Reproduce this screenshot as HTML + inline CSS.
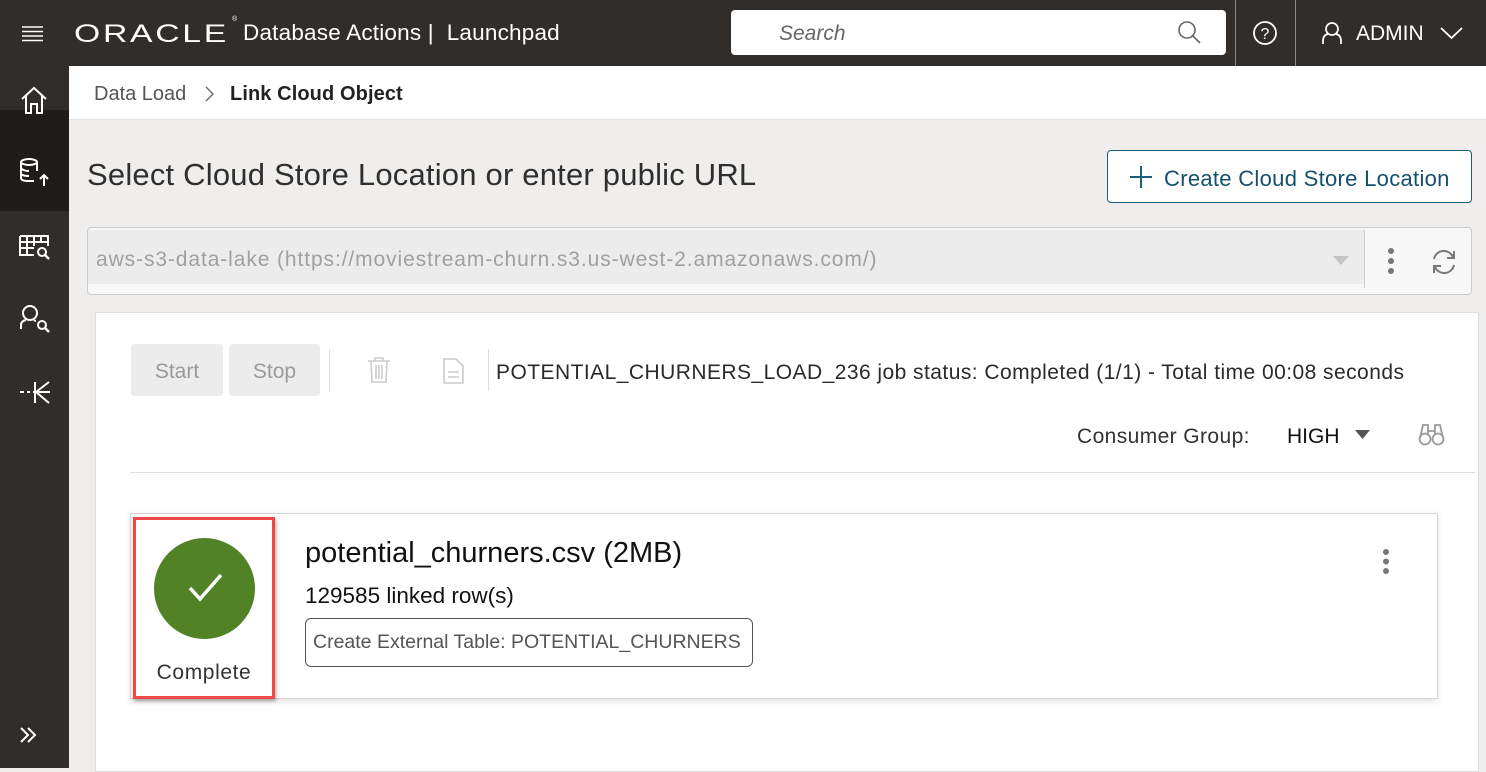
<!DOCTYPE html>
<html><head><meta charset="utf-8"><style>
*{box-sizing:border-box;margin:0;padding:0}
body{width:1486px;height:768px;overflow:hidden;position:relative;font-family:"Liberation Sans",sans-serif;background:#efeeec}
.a{position:absolute}
.top{left:0;top:0;width:1486px;height:66px;background:#312d2a}
.side{left:0;top:66px;width:69px;height:702px;background:#312d2a}
.wt{color:#fff}
svg{position:absolute;overflow:visible}
</style></head><body>
<div class="a top"></div>
<div class="a side"></div>
<div class="a" style="left:0;top:110px;width:69px;height:101px;background:#201c1a"></div>
<svg style="left:22px;top:26px" width="22" height="16"><path d="M0 1H21M0 5.5H21M0 10H21M0 14.5H21" stroke="#fff" stroke-width="1.6"/></svg>
<div class="a wt" style="left:74px;top:19px;font-size:25px;letter-spacing:2px;transform:scaleX(1.35);transform-origin:left;line-height:30px">ORACLE</div>
<div class="a wt" style="left:232px;top:16px;font-size:7px">®</div>
<div class="a wt" style="left:243px;top:20px;font-size:22.5px;letter-spacing:0.2px;line-height:26px;white-space:pre">Database Actions |  Launchpad</div>
<div class="a" style="left:731px;top:10px;width:495px;height:45px;background:#fff;border-radius:4px"></div>
<div class="a" style="left:779px;top:22px;font-size:21px;font-style:italic;color:#666">Search</div>
<svg style="left:1177px;top:20px" width="26" height="26"><circle cx="10" cy="10" r="8" fill="none" stroke="#666" stroke-width="1.6"/><path d="M16 16L23 23" stroke="#666" stroke-width="1.6"/></svg>
<div class="a" style="left:1235px;top:0;width:1px;height:66px;background:#888"></div>
<div class="a" style="left:1295px;top:0;width:1px;height:66px;background:#888"></div>
<svg style="left:1253px;top:21px" width="25" height="25"><circle cx="12" cy="12" r="11" fill="none" stroke="#fff" stroke-width="1.8"/><text x="12" y="18" text-anchor="middle" font-size="16" fill="#fff" font-family="Liberation Sans">?</text></svg>
<svg style="left:1322px;top:22px" width="22" height="24"><circle cx="10" cy="7" r="6" fill="none" stroke="#fff" stroke-width="1.7"/><path d="M1 22V19Q1 13 6 12M19 22V19Q19 13 14 12" fill="none" stroke="#fff" stroke-width="1.7"/></svg>
<div class="a wt" style="left:1356px;top:22px;font-size:21px">ADMIN</div>
<svg style="left:1440px;top:27px" width="24" height="14"><path d="M1 1L11.5 11L22 1" fill="none" stroke="#fff" stroke-width="1.8"/></svg>
<svg style="left:20px;top:86px" width="30" height="30"><path d="M2 13L14 2L26 13M6 10V27H11V18H17V27H22V10" fill="none" stroke="#fff" stroke-width="2"/></svg>
<svg style="left:19px;top:158px" width="34" height="34"><ellipse cx="10" cy="4" rx="8" ry="3" fill="none" stroke="#fff" stroke-width="2"/><path d="M2 4V20Q2 23 10 23H15M18 4V13M2 10Q4 13 10 13M2 16Q4 18 10 18" fill="none" stroke="#fff" stroke-width="2"/><path d="M25 28V17M21 21L25 17L29 21" fill="none" stroke="#fff" stroke-width="2"/></svg>
<svg style="left:19px;top:234px" width="34" height="32"><path d="M1 2H29V12M1 2V21H15M1 8H29M1 14H15M8 2V21M15 2V12M22 2V8" fill="none" stroke="#fff" stroke-width="2"/><circle cx="23" cy="18" r="4" fill="none" stroke="#fff" stroke-width="2"/><path d="M26 21L30 25" stroke="#fff" stroke-width="2.4"/></svg>
<svg style="left:19px;top:305px" width="34" height="32"><circle cx="11" cy="8" r="7" fill="none" stroke="#fff" stroke-width="2"/><path d="M2 24V20Q2 16 7 15M15 15Q16 16 17 16" fill="none" stroke="#fff" stroke-width="2"/><circle cx="23" cy="20" r="4" fill="none" stroke="#fff" stroke-width="2"/><path d="M26 23L30 27" stroke="#fff" stroke-width="2.4"/></svg>
<svg style="left:19px;top:381px" width="34" height="24"><path d="M1 11H5M8 11H11M14 11H31M16 1V22M30 1L17 11L30 22" fill="none" stroke="#fff" stroke-width="2"/></svg>
<svg style="left:19px;top:726px" width="20" height="20"><path d="M2 2L9 9L2 16M9 2L16 9L9 16" fill="none" stroke="#fff" stroke-width="2"/></svg>
<div class="a" style="left:69px;top:66px;width:1417px;height:54px;background:#fff;border-bottom:1px solid #e4e4e4"></div>
<div class="a" style="left:94px;top:83px;font-size:20px;color:#555">Data Load</div>
<svg style="left:205px;top:86px" width="10" height="16"><path d="M1 1L8 8L1 15" fill="none" stroke="#666" stroke-width="1.4"/></svg>
<div class="a" style="left:230px;top:83px;font-size:20px;color:#222;font-weight:bold;letter-spacing:0.1px">Link Cloud Object</div>
<div class="a" style="left:87px;top:157px;font-size:31px;letter-spacing:0.2px;color:#2f2f2f">Select Cloud Store Location or enter public URL</div>
<div class="a" style="left:1107px;top:150px;width:365px;height:53px;border:1.5px solid #1a5f80;border-radius:4px;background:#fff"></div>
<svg style="left:1130px;top:166px" width="22" height="22"><path d="M11 0V22M0 11H22" stroke="#1a5f80" stroke-width="2"/></svg>
<div class="a" style="left:1164px;top:166px;font-size:22px;letter-spacing:0.3px;color:#14506e">Create Cloud Store Location</div>
<div class="a" style="left:87px;top:227px;width:1385px;height:68px;background:#f7f7f7;border:1px solid #ccc;border-radius:4px"></div>
<div class="a" style="left:88px;top:230px;width:1276px;height:54px;background:#ececec"></div>
<div class="a" style="left:1364px;top:230px;width:1px;height:58px;background:#ccc"></div>
<div class="a" style="left:96px;top:248px;font-size:21px;letter-spacing:0.9px;color:#a0a0a0">aws-s3-data-lake (https://moviestream-churn.s3.us-west-2.amazonaws.com/)</div>
<svg style="left:1333px;top:256px" width="16" height="10"><path d="M0 0H16L8 9Z" fill="#c4c4c4"/></svg>
<svg style="left:1386px;top:247px" width="10" height="28"><circle cx="5" cy="4" r="3" fill="#777"/><circle cx="5" cy="14" r="3" fill="#777"/><circle cx="5" cy="24" r="3" fill="#777"/></svg>
<svg style="left:1431px;top:249px" width="26" height="26"><path d="M22 8A10 10 0 0 0 3 10M4 18A10 10 0 0 0 23 16" fill="none" stroke="#777" stroke-width="2"/><path d="M23 2V9H16M3 24V17H10" fill="none" stroke="#777" stroke-width="2"/></svg>
<div class="a" style="left:95px;top:312px;width:1384px;height:460px;background:#fff;border:1px solid #ddd"></div>
<div class="a" style="left:131px;top:344px;width:92px;height:52px;background:#ececec;border-radius:3px;color:#9a9a9a;font-size:21px;text-align:center;line-height:56px">Start</div>
<div class="a" style="left:229px;top:344px;width:91px;height:52px;background:#ececec;border-radius:3px;color:#9a9a9a;font-size:21px;text-align:center;line-height:56px">Stop</div>
<div class="a" style="left:329px;top:349px;width:1px;height:42px;background:#ddd"></div>
<svg style="left:367px;top:356px" width="24" height="28"><path d="M1 5H23M8 5V2H16V5M4 5L5 26H19L20 5M9 9V23M12 9V23M15 9V23" fill="none" stroke="#ccc" stroke-width="1.6"/></svg>
<svg style="left:443px;top:358px" width="22" height="26"><path d="M1 1H13L20 8V25H1Z" fill="none" stroke="#ccc" stroke-width="1.6"/><path d="M5 14H16M5 19H16" stroke="#ccc" stroke-width="1.6"/></svg>
<div class="a" style="left:488px;top:349px;width:1px;height:42px;background:#ddd"></div>
<div class="a" style="left:496px;top:361px;font-size:21px;letter-spacing:0.45px;color:#2a2a2a">POTENTIAL_CHURNERS_LOAD_236 job status: Completed (1/1) - Total time 00:08 seconds</div>
<div class="a" style="left:1077px;top:425px;font-size:21px;letter-spacing:0.4px;color:#333">Consumer Group:</div>
<div class="a" style="left:1287px;top:425px;font-size:21px;color:#111">HIGH</div>
<svg style="left:1355px;top:430px" width="16" height="10"><path d="M0 0H15L7.5 9Z" fill="#555"/></svg>
<svg style="left:1418px;top:423px" width="28" height="24"><circle cx="7" cy="16" r="5.5" fill="none" stroke="#999" stroke-width="1.8"/><circle cx="20" cy="16" r="5.5" fill="none" stroke="#999" stroke-width="1.8"/><path d="M2 15L5 2H10V12M25 15L22 2H17V12M10 8H17" fill="none" stroke="#999" stroke-width="1.8"/></svg>
<div class="a" style="left:130px;top:472px;width:1345px;height:1px;background:#ddd"></div>
<div class="a" style="left:130px;top:513px;width:1308px;height:186px;background:#fff;border:1px solid #d6d6d6;box-shadow:0 2px 6px rgba(0,0,0,.12)"></div>
<div class="a" style="left:133px;top:517px;width:142px;height:182px;border:3px solid #f04848;box-shadow:1px 2px 4px rgba(0,0,0,.35)"></div>
<div class="a" style="left:154px;top:538px;width:101px;height:101px;border-radius:50%;background:#518226"></div>
<svg style="left:188px;top:573px" width="36" height="30"><path d="M2 15L12 26L33 2" fill="none" stroke="#fff" stroke-width="3.5"/></svg>
<div class="a" style="left:135px;top:661px;width:138px;text-align:center;font-size:21px;letter-spacing:0.6px;color:#333">Complete</div>
<div class="a" style="left:305px;top:537px;font-size:29px;color:#111">potential_churners.csv (2MB)</div>
<div class="a" style="left:305px;top:583px;font-size:22.5px;color:#111">129585 linked row(s)</div>
<div class="a" style="left:305px;top:618px;width:448px;height:49px;border:1px solid #555;border-radius:6px;font-size:19.5px;color:#555;line-height:47px;padding-left:7px;white-space:nowrap">Create External Table: POTENTIAL_CHURNERS</div>
<svg style="left:1381px;top:548px" width="10" height="28"><circle cx="5" cy="4" r="3" fill="#777"/><circle cx="5" cy="13.5" r="3" fill="#777"/><circle cx="5" cy="23" r="3" fill="#777"/></svg>
</body></html>
